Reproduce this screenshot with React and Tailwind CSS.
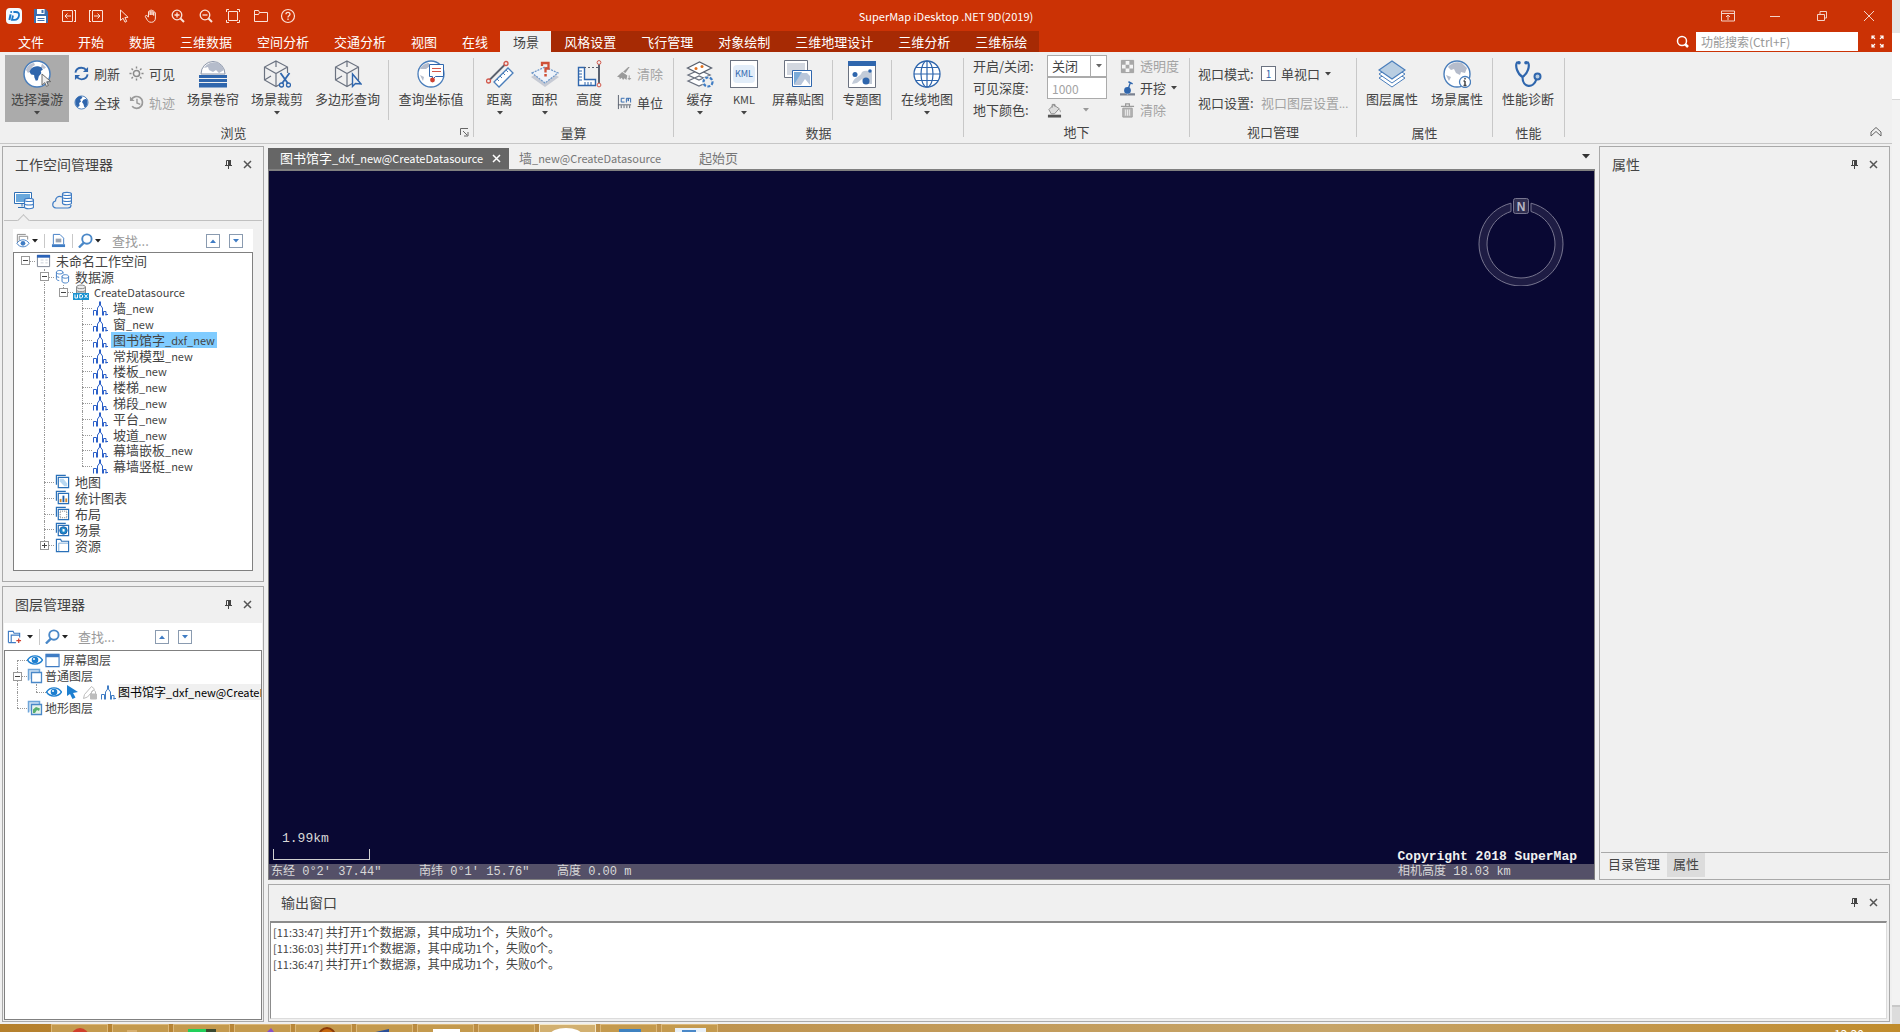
import React from "react";

/* ---------- small shared pieces ---------- */

const Svg = ({ s = 16, vb = 16, className = "", children }) => (
  <svg
    width={s}
    height={s}
    viewBox={`0 0 ${vb} ${vb}`}
    fill="none"
    stroke="currentColor"
    strokeWidth="1"
    aria-hidden="true"
    className={`shrink-0 ${className}`}
  >
    {children}
  </svg>
);

const Caret = ({ className = "text-[#444]" }) => (
  <svg width="6" height="4" viewBox="0 0 6 4" aria-hidden="true" className={`shrink-0 ${className}`}>
    <path d="M0 0h6L3 3.6z" fill="currentColor" />
  </svg>
);

/* Latin runs are set smaller than the Chinese characters around them */
const Mixed = ({ text }) =>
  text.split(/([\x20-\x7e]+)/).map((part, i) =>
    i % 2 ? (
      <span key={i} className="text-[11px]">{part}</span>
    ) : (
      part
    ),
  );

/* ---------- title bar icons ---------- */

const LogoIcon = () => (
  <Svg s={16}>
    <rect x="0" y="0" width="16" height="16" rx="4" fill="#f4faff" stroke="none" />
    <path d="M4.600 6.400 3.400 12" stroke="#1a78c8" strokeWidth="2" />
    <circle cx="5.200" cy="4" r="1" fill="#1a78c8" stroke="none" />
    <path d="M7.400 4h2.400c2.400 0 3.600 1.300 3.200 3.700-.5 2.700-2.100 4.200-4.600 4.200H6l1-4.400" stroke="#1a78c8" strokeWidth="1.800" />
  </Svg>
);
const SaveIcon = () => (
  <Svg s={16}>
    <path d="M1 1h11.500L15 3.500V15H1z" fill="#3b6fb0" stroke="none" />
    <rect x="4" y="1" width="7.500" height="5" fill="#fff" stroke="none" />
    <rect x="8.500" y="2" width="2" height="3" fill="#3b6fb0" stroke="none" />
    <rect x="3" y="8" width="10" height="7" fill="#fff" stroke="none" />
    <path d="M4.500 10.500h7M4.500 12.500h7" stroke="#3b6fb0" />
  </Svg>
);
const BoxLeftIcon = () => (
  <Svg s={16}>
    <path d="M1.500 2.500h10v11h-10zM14.500 2v12M13 2.500h1.500M13 13.500h1.500M4 8h6M6.500 5.500 4 8l2.500 2.500" />
  </Svg>
);
const BoxRightIcon = () => (
  <Svg s={16}>
    <path d="M4.500 2.500h10v11h-10zM1.500 2v12M3 2.500H1.500M3 13.500H1.500M6 8h6M9.500 5.500 12 8l-2.500 2.500" />
  </Svg>
);
const ArrowIcon = () => (
  <Svg s={16}>
    <path d="M4.500 2v10.500l2.600-2.300 1.900 4 1.700-.8-1.800-3.900 3.200-.2z" />
  </Svg>
);
const HandIcon = () => (
  <Svg s={16}>
    <path d="M5.500 9V3.800c0-1.200 1.700-1.200 1.700 0V7V2.800c0-1.200 1.800-1.200 1.800 0V7V3.400c0-1.200 1.700-1.200 1.700 0V7.500V5c0-1.200 1.700-1.200 1.700 0v5c0 2.500-1.400 4.300-4 4.300-2.700 0-3.600-1.300-4.700-3.200L2.400 8.700c-.5-1 .7-1.700 1.500-1z" />
  </Svg>
);
const ZoomInIcon = () => (
  <Svg s={16}>
    <circle cx="7" cy="7" r="4.800" strokeWidth="1.300" />
    <path d="M10.500 10.500 14 14" strokeWidth="2" />
    <path d="M4.500 7h5M7 4.500v5" strokeWidth="1.300" />
  </Svg>
);
const ZoomOutIcon = () => (
  <Svg s={16}>
    <circle cx="7" cy="7" r="4.800" strokeWidth="1.300" />
    <path d="M10.500 10.500 14 14" strokeWidth="2" />
    <path d="M4.500 7h5" strokeWidth="1.300" />
  </Svg>
);
const FitIcon = () => (
  <Svg s={16}>
    <path d="M3.500 3.500h9v9h-9z" />
    <path d="M1.500 4V1.500H4M12 1.500h2.500V4M14.500 12v2.500H12M4 14.500H1.500V12" />
  </Svg>
);
const FolderIcon = () => (
  <Svg s={16}>
    <path d="M1.500 13.500v-11h4l1 2h8v9zM1.500 6.500h4l1-2" />
  </Svg>
);
const HelpIcon = () => (
  <Svg s={16}>
    <circle cx="8" cy="8" r="6.500" strokeWidth="1.200" />
    <path d="M6 6.300c0-2.600 4-2.500 4 0 0 1.500-2 1.500-2 3.200M8 10.500v1.500" strokeWidth="1.300" />
  </Svg>
);

const quickTools = [
  ["SuperMap", LogoIcon],
  ["保存", SaveIcon],
  ["后退", BoxLeftIcon],
  ["前进", BoxRightIcon],
  ["选择", ArrowIcon],
  ["平移", HandIcon],
  ["放大", ZoomInIcon],
  ["缩小", ZoomOutIcon],
  ["全幅", FitIcon],
  ["打开", FolderIcon],
  ["帮助", HelpIcon],
];

const windowTools = [
  ["功能区", <Svg s={14} vb={14}><path d="M.5 2h13v10H.5zM.5 4.500h13M7 11V6M5 8l2-2 2 2" /></Svg>],
  ["最小化", <Svg s={12} vb={12}><path d="M1 6.500h10" /></Svg>],
  ["还原", <Svg s={12} vb={12}><path d="M1.500 4.500h7v6h-7zM4 4V1.500h6.500V8H9" /></Svg>],
  ["关闭", <Svg s={12} vb={12}><path d="m1 1 10 10M11 1 1 11" /></Svg>],
];

/* ---------- ribbon icons ---------- */

const CONTINENT = "M8 8c2-2.600 6-3.400 8-2.400l2.800.9 1 2.300-2 1.200.5 2.300-2.500 3-1 3.900-2 .6-1.400-3.400-.3-2.400-3-.6-1.700-2.600z";

const RoamIcon = () => (
  <Svg s={28} vb={28}>
    <circle cx="14" cy="14" r="13" fill="#fff" stroke="#4a7ebb" strokeWidth="1.500" />
    <path d="M3 10c1-4 5-7 8-7l1 2-3 2-1 4-3 2zM19 3.500l4 4-2 1.500-3-2z" fill="#b9c0d0" stroke="none" />
    <path d={CONTINENT} transform="translate(0 1)" fill="#2f66ad" stroke="none" />
    <path d="m19 14 0 11 2.800-2.400 1.600 3.800 2-.9-1.700-3.700 4.100-.2z" fill="#eee" stroke="#6a6a6a" />
  </Svg>
);
const CurtainIcon = () => (
  <Svg s={28} vb={28}>
    <path d="M2 14a12 12.500 0 0 1 24 0z" fill="#fff" stroke="#8a94a8" />
    <path d="M5 8c3-5 9-7 14-5 3 1.500 5 4 6 7l-5 3-3-3-3 2-4-2-1-3z" fill="#b5bccb" stroke="none" />
    <path d="M0 15h28v3H0zM0 19h28v3H0zM0 23h28v4.500H0z" fill="#2f66ad" stroke="none" />
  </Svg>
);
const CubePath = () => (
  <g stroke="#6b7280" strokeWidth="1.200">
    <path d="m13 1 11.500 6v13L13 26.500 1.500 20V7zM1.500 7 13 13.500 24.500 7M13 13.500v13M13 1v6M1.500 20 8 16" />
  </g>
);
const CubeCutIcon = () => (
  <Svg s={28} vb={28}>
    <CubePath />
    <path d="M16 13h12v15H16z" fill="#efefef" stroke="none" />
    <path d="m17.500 13 7.500 10.500M26.500 13 19 23.500" stroke="#2f66ad" strokeWidth="1.800" />
    <circle cx="18.500" cy="25" r="2" stroke="#2f66ad" strokeWidth="1.300" />
    <circle cx="25.500" cy="25" r="2" stroke="#2f66ad" strokeWidth="1.300" />
  </Svg>
);
const CubePickIcon = () => (
  <Svg s={28} vb={28}>
    <CubePath />
    <path d="M18.500 14v12.500l3-3 5.500.5z" fill="#efefef" stroke="#2f66ad" strokeWidth="1.400" />
  </Svg>
);
const CoordIcon = () => (
  <Svg s={28} vb={28}>
    <circle cx="14" cy="14" r="13" fill="#fff" stroke="#4a7ebb" strokeWidth="1.300" />
    <path d="M3 9c2-4 6-6 9-6l1 3-4 3zM3 15l4 2-1 4z" fill="#b5bccb" stroke="none" />
    <path d="M12.500 4.500h14v12h-8l-3 3v-3h-3z" fill="#fff" stroke="#2f66ad" />
    <path d="M15 8.500h9M15 11.500h9" stroke="#d2574a" strokeWidth="1.200" />
    <circle cx="15.500" cy="20" r="2.400" fill="#cf4030" stroke="none" />
  </Svg>
);
const RefreshIcon = () => (
  <Svg s={15} className="text-[#2f66ad]">
    <path d="M1.500 7C2 3.800 4.700 1.800 8 1.800c2.200 0 4 1 5.200 2.700M14.500 9c-.5 3.200-3.200 5.200-6.500 5.200-2.200 0-4-1-5.200-2.700" strokeWidth="2" />
    <path d="M15 1v5.500H9.500zM1 15V9.500h5.500z" fill="currentColor" stroke="none" />
  </Svg>
);
const GlobeSmallIcon = () => (
  <Svg s={15}>
    <circle cx="8" cy="8" r="7" fill="#fff" stroke="#4a7ebb" />
    <path d="M1.500 6C3 2 6 1 8 1.200L9 3 6.500 5l1 2-2 1.500.5 3L4 13C2 11.500 1 9 1.500 6zM10 5l3-1c2 2 2 6 0 8.500l-2 .5-1-3.500-1.500-2z" fill="#2f66ad" stroke="none" />
  </Svg>
);
const SunIcon = () => (
  <Svg s={15} className="text-[#8a8a8a]">
    <circle cx="8" cy="8" r="3.300" strokeWidth="1.600" />
    <path d="M8 .5v2.200M8 13.300v2.200M.5 8h2.200M13.300 8h2.200M2.700 2.700l1.500 1.500M11.800 11.800l1.500 1.500M13.300 2.700l-1.500 1.500M4.200 11.800l-1.500 1.500" strokeWidth="1.500" />
  </Svg>
);
const HistoryIcon = () => (
  <Svg s={15} className="text-[#9a9a9a]">
    <path d="M2.500 5a6.300 6.300 0 1 1 .8 7" strokeWidth="1.800" />
    <path d="M1 1.500v5h5z" fill="currentColor" stroke="none" />
    <path d="M8.500 4v4.500L12 10" strokeWidth="1.500" />
  </Svg>
);
const DistanceIcon = () => (
  <Svg s={28} vb={28}>
    <path d="m3 20.500 16-16" stroke="#59606e" strokeWidth="1.800" />
    <circle cx="2.500" cy="21" r="2" stroke="#d2574a" strokeWidth="1.300" fill="#efefef" />
    <circle cx="20" cy="3.500" r="2" stroke="#d2574a" strokeWidth="1.300" fill="#efefef" />
    <path d="M8 22 22 8l5 5-14 14z" fill="#fff" stroke="#4a7ebb" strokeWidth="1.300" />
    <path d="m11 19 2 2M14 16l2 2M17 13l2 2M20 10l2 2" stroke="#4a7ebb" />
  </Svg>
);
const AreaIcon = () => (
  <Svg s={28} vb={28}>
    <path d="m0 17 14 10 14-10-14-8z" fill="#c6cad4" stroke="none" />
    <path d="m1 13 13-6 13 6-13 10z" fill="#eef3fa" stroke="#6d97c9" strokeWidth="1.200" strokeDasharray="2 1" />
    <path d="M11 6V3h6.500v5.500h-3v4" stroke="#cf5038" strokeWidth="2.300" />
    <path d="M13.300 14h2.500v2.500h-2.500z" fill="#cf5038" stroke="none" />
  </Svg>
);
const HeightIcon = () => (
  <Svg s={28} vb={28}>
    <path d="M3.500 7.500h6v12h11v6h-17z" fill="#fff" stroke="#2f66ad" strokeWidth="1.400" />
    <path d="M4 11h3M4 14h3M4 17h3M4 20h3M10 25v-3M13 25v-3M16 25v-3" stroke="#2f66ad" />
    <path d="M9 7.500h14" stroke="#59606e" strokeDasharray="2 2" />
    <path d="M24 4v19" stroke="#59606e" strokeWidth="2" />
    <circle cx="24" cy="2.500" r="1.900" stroke="#d2574a" fill="#efefef" />
    <circle cx="24" cy="25" r="1.900" stroke="#d2574a" fill="#efefef" />
  </Svg>
);
const BrushIcon = () => (
  <Svg s={15} className="text-[#9a9a9a]">
    <path d="M13.500 1 9 7.500 6.500 6 12 1z" fill="currentColor" stroke="none" />
    <path d="M5.500 6.500 11 10l-1 5-2-2-1.500 2L5 12.500 3 14l-.5-2L0 11.500z" fill="currentColor" stroke="none" />
    <path d="M13 10v5M11.500 13.500h3.500" />
  </Svg>
);
const UnitIcon = () => (
  <Svg s={15}>
    <path d="M1.500 0v15M1 10.500h14M4.500 11v3M7.500 11v3M10.500 11v3M13.500 11v3" stroke="#59606e" />
    <path d="M8 3.500H4.500v4H8M10 8V3.500h2v3v-3h2.500V8" stroke="#2f66ad" />
  </Svg>
);
const CacheIcon = () => (
  <Svg s={28} vb={28}>
    <path d="m2 21 11-5 11 5-11 5zM2 15l11-5 11 5-11 5z" fill="#fff" stroke="#6b7280" strokeWidth="1.300" />
    <path d="m1.500 8 12-6 12 6-12 6z" fill="#fff" stroke="#59606e" strokeWidth="1.300" />
    <circle cx="10" cy="8.500" r="1.500" fill="#e07020" stroke="none" />
    <circle cx="16" cy="6.500" r="1.500" fill="#e07020" stroke="none" />
    <circle cx="22" cy="22" r="6" fill="#efefef" stroke="none" />
    <circle cx="22" cy="22" r="4.500" stroke="#3f7cc4" strokeWidth="2.200" strokeDasharray="3 1.500" />
  </Svg>
);
const KmlIcon = () => (
  <span className="grid h-[28px] w-[28px] place-items-center border border-[#6b7280] bg-white">
    <span className="rounded-sm bg-[#e2edf9] px-0.5 text-[9px] leading-[18px] text-[#2f66ad]">KML</span>
  </span>
);
const OverlayIcon = () => (
  <Svg s={28} vb={28}>
    <path d="M.5 .5h23v17H.5z" fill="#fff" stroke="#6b7280" />
    <path d="M3 3h18v12H3z" fill="#d3d8e0" stroke="none" />
    <path d="M8.500 10.500h19v16h-19z" fill="#fff" stroke="#2f66ad" />
    <path d="m10 25 7-12h6l3 3v9z" fill="#b9c6da" stroke="none" />
    <path d="M10 25V12h8z" fill="#7aaad8" stroke="none" />
    <path d="m17 25 4-6 5 6z" fill="#fff" stroke="none" />
  </Svg>
);
const ThemeIcon = () => (
  <Svg s={28} vb={28}>
    <path d="M.5 1.500h27v26H.5z" fill="#fff" stroke="#6b7280" />
    <path d="M0 1h28v5H0z" fill="#2f66ad" stroke="none" />
    <path d="M4 24c2-8 8-6 10-12 3-2 6-1 10 0v12h-7l-3-5-5 4z" fill="#c2cbd8" stroke="none" />
    <circle cx="7" cy="14.500" r="2.500" fill="#2f66ad" stroke="none" />
    <circle cx="18" cy="21" r="3.500" fill="#2f66ad" stroke="none" />
    <circle cx="22" cy="11" r="1.800" fill="#2f66ad" stroke="none" />
  </Svg>
);
const OnlineIcon = () => (
  <Svg s={28} vb={28} className="text-[#2f66ad]">
    <circle cx="14" cy="14" r="13" strokeWidth="1.300" fill="#fff" />
    <ellipse cx="14" cy="14" rx="6" ry="13" strokeWidth="1.200" />
    <path d="M14 1v26M1 14h26M3 7.500h22M3 20.500h22" strokeWidth="1.200" />
  </Svg>
);
const CheckerIcon = () => (
  <Svg s={15}>
    <path d="M1.500 1.500h13v13h-13z" fill="#f4f4f4" stroke="#9a9a9a" />
    <path d="M2 2h4v4H2zM10 2h4v4h-4zM6 6h4v4H6zM2 10h4v4H2zM10 10h4v4h-4z" fill="#a8a8a8" stroke="none" />
  </Svg>
);
const DigIcon = () => (
  <Svg s={15}>
    <path d="M0 15.500V13h5l3 1.500 3-1.500h5v2.500z" fill="#7a8190" stroke="none" />
    <circle cx="8" cy="10" r="3.600" fill="#2f66ad" stroke="none" />
    <path d="m8.500 9 2.500-7M9 .8 13.500 3" stroke="#2f66ad" strokeWidth="1.500" />
  </Svg>
);
const TrashIcon = () => (
  <Svg s={15} className="text-[#9a9a9a]">
    <path d="M1 3.500h14M6 3V1h4v2" strokeWidth="1.300" />
    <path d="M3 5.500h10v9.500H3z" fill="#b9b9b9" />
    <path d="M6 7v6.500M8 7v6.500M10 7v6.500" stroke="#eee" />
  </Svg>
);
const BucketIcon = () => (
  <Svg s={15}>
    <path d="m2 7 5-5 6 4-5 5.500H4.500z" fill="#ddd" stroke="#8a8a8a" />
    <path d="M5.500 5V1.500h3V4" stroke="#8a8a8a" />
    <path d="M13 6c2 2 2 3 1 4z" fill="#8a8a8a" stroke="none" />
    <path d="M1 12.500h14v3H1z" fill="#555" stroke="none" />
  </Svg>
);
const LayersIcon = () => (
  <Svg s={28} vb={28} className="text-[#4a7ebb]">
    <path d="m1 18 13-8 13 8-13 9z" fill="#fff" />
    <path d="m1 14 13-8 13 8-13 9z" fill="#fff" />
    <path d="m1 10 13-9 13 9-13 9z" fill="#b9cee2" stroke="#4a7ebb" strokeWidth="1.200" />
  </Svg>
);
const SceneInfoIcon = () => (
  <Svg s={28} vb={28}>
    <circle cx="14" cy="14" r="13" fill="#fff" stroke="#4a7ebb" strokeWidth="1.400" />
    <path d="M5 7c3-4 9-6 14-4l5 5-2 5-4-1-1 3-4-2-2-4-3 1zM3 15l5 2-2 4z" fill="#b5bccb" stroke="none" />
    <circle cx="22" cy="22" r="5.500" fill="#fff" stroke="#4a7ebb" strokeWidth="1.300" />
    <path d="M22 21v4.500M22 18v1.600M20.500 21H22M20.500 25.500h3" stroke="#444" strokeWidth="1.500" />
  </Svg>
);
const StethoscopeIcon = () => (
  <Svg s={28} vb={28} className="text-[#2f66ad]">
    <path d="M5 2.500H3c-2 3 0 11 5.500 14.500C14 13.500 16 5.500 14 2.500h-2M8.500 17c0 11 11 12 14 2" strokeWidth="2.200" />
    <circle cx="5" cy="2.800" r="1.800" fill="currentColor" stroke="none" />
    <circle cx="12" cy="2.800" r="1.800" fill="currentColor" stroke="none" />
    <circle cx="23.500" cy="16.500" r="3" strokeWidth="2" fill="#b9cee2" />
  </Svg>
);

/* ---------- tree icons ---------- */

const LineSetIcon = ({ color = "text-[#2a5fc8]" }) => (
  <Svg s={16} className={color}>
    <path d="M1.500 15.500v-5h3v5M5.500 15.500V8L8 4.500 10.500 8v7.500M11.500 15.500v-4H14v4M4 14.500h2M10 14.500h2M13.500 14.500H16" />
    <path d="M7 1.500h2V5H7z" fill="currentColor" stroke="none" />
  </Svg>
);
const WorkspaceIcon = () => (
  <Svg s={15}>
    <path d="M1.500 2.500h13v12h-13z" fill="#fff" stroke="#7a8190" />
    <path d="M1 2h14v3H1z" fill="#2a62b8" stroke="none" />
    <path d="M5 7.500h3M5 10.500h3M10 7.500h2.500M10 10.500h2.500" stroke="#c9ced8" />
  </Svg>
);
const SourcesIcon = () => (
  <Svg s={15} className="text-[#3f7cc4]">
    <path d="M8.500 3.500c0-2.600-7-2.600-7 0v7c0 1 1.500 1.700 3 1.900M1.500 7c0 1 1 1.600 3 1.900M1.500 3.500c0 2.400 7 2.400 7 0V5" />
    <path d="M7.500 8v5c0 2.600 7 2.600 7 0V8c0-2.600-7-2.600-7 0 0 2.400 7 2.400 7 0" fill="#fff" />
  </Svg>
);
const UdbIcon = () => (
  <Svg s={16}>
    <path d="M3.500 3v6h9V3c0-2.600-9-2.600-9 0 0 2.200 9 2.200 9 0M3.500 6c0 2.200 9 2.200 9 0" fill="#ececec" stroke="#8a8a8a" />
    <path d="M0 9h16v7H0z" fill="#1b93d1" stroke="none" />
    <path d="M2 10.500v3.500h2.500v-3.500M6.800 10.500h1.700l1 1v1.500l-1 1H6.800zM11.500 10.500l3 3.500M14.500 10.500l-3 3.500" stroke="#fff" />
  </Svg>
);
const Stack = ({ children }) => (
  <Svg s={15}>
    <path d="M1.500 11.500v-10h10" stroke="#2a70b8" strokeWidth="1.300" />
    <path d="M3.500 3.500h11v11h-11z" fill="#fff" stroke="#2a70b8" strokeWidth="1.300" />
    {children}
  </Svg>
);
const MapIcon = () => (
  <Stack>
    <path d="M5 5h4l4 5v3h-3L5 8z" fill="#b8d8f2" stroke="none" />
  </Stack>
);
const ChartIcon = () => (
  <Stack>
    <path d="M5 13V9.500h2V13z" fill="#d08a30" stroke="none" />
    <path d="M8 13V6h2v7z" fill="#1f5fa8" stroke="none" />
    <path d="M11 13V9h2v4z" fill="#d08a30" stroke="none" />
  </Stack>
);
const LayoutIcon = () => (
  <Stack>
    <path d="M5.500 5.500h7v7h-7z" stroke="#777" strokeDasharray="1 1" />
  </Stack>
);
const SceneIcon = () => (
  <Stack>
    <circle cx="9" cy="9" r="4" fill="#1d86c8" stroke="#1f5fa8" />
    <path d="m8 7 2.500 1-.5 2.500L8 10z" fill="#fff" stroke="none" />
  </Stack>
);
const ResourceIcon = () => (
  <Svg s={15}>
    <path d="M1.500 13.500v-12H6l1 2h7.500v11h-13z" fill="#fff" stroke="#2a70b8" strokeWidth="1.200" />
    <path d="M4 14V5.500h10" stroke="#7aaad8" />
  </Svg>
);
const EyeIcon = ({ s = 16 }) => (
  <Svg s={s}>
    <path d="M.5 8C4 2.500 12 2.500 15.500 8 12 13.500 4 13.500.5 8z" fill="#fff" stroke="#1d7fd0" strokeWidth="1.400" />
    <circle cx="8" cy="8" r="3.300" fill="#1d7fd0" stroke="none" />
    <circle cx="7" cy="7" r="1" fill="#fff" stroke="none" />
  </Svg>
);
const ScreenLayerIcon = () => (
  <Svg s={15}>
    <path d="M1 1.500h14v13H1z" fill="#fff" stroke="#3f7cc4" strokeWidth="1.200" />
    <path d="M1 1h14v3.500H1z" fill="#3f7cc4" stroke="none" />
  </Svg>
);
const NormalLayerIcon = () => (
  <Svg s={16}>
    <path d="M1.500 12.500v-11h11v3" stroke="#6fa6da" strokeWidth="1.500" fill="#cfe2f4" />
    <path d="M4.500 4.500h10v10h-10z" fill="#fff" stroke="#4a88c8" strokeWidth="1.300" />
  </Svg>
);
const TerrainLayerIcon = () => (
  <Svg s={16}>
    <path d="M1.500 12.500v-11h11v3" stroke="#6fa6da" strokeWidth="1.500" fill="#cfe2f4" />
    <path d="M4.500 4.500h10v10h-10z" fill="#e8f3ea" stroke="#4a88c8" strokeWidth="1.300" />
    <path d="M6 13V9.500L9 7l4 1.500-1 2.500-2-1-2 3z" fill="#58b070" stroke="none" />
  </Svg>
);
const PointerIcon = () => (
  <Svg s={16}>
    <path d="M3 1v11l3-2 2.500 5 3-1.500L9 9l5-1z" fill="#1d7fd0" stroke="none" />
  </Svg>
);
const EditLockIcon = () => (
  <Svg s={16} className="text-[#bdbdbd]">
    <path d="m1.500 14.500 1-4 7-8 3 2.500-7 8z" />
    <path d="M8.500 10h6v5h-6z" fill="#bdbdbd" />
    <path d="M9.500 10V8c0-2 4-2 4 0v2" />
  </Svg>
);
const SearchBlueIcon = () => (
  <Svg s={15} className="text-[#4a88c8]">
    <circle cx="9.500" cy="6.500" r="5" strokeWidth="2" />
    <path d="m6 10.500-5 5" strokeWidth="2.500" />
  </Svg>
);

/* ---------- ribbon building blocks ---------- */

function BigButton({ icon: Icon, label, caret, active, width = "w-[64px]" }) {
  return (
    <button
      type="button"
      className={`flex h-[67px] shrink-0 flex-col items-center pt-[5px] ${width} ${active ? "bg-[#ababab]" : ""}`}
    >
      <Icon />
      <span className="mt-[3px] leading-4 whitespace-nowrap"><Mixed text={label} /></span>
      {caret && <Caret className="mt-1 text-[#444]" />}
    </button>
  );
}

function SmallButton({ icon: Icon, label, disabled, height = "h-[29px]", caret }) {
  return (
    <button
      type="button"
      disabled={disabled}
      className={`flex items-center gap-[5px] whitespace-nowrap ${height} ${disabled ? "text-[#a3a3a3]" : ""}`}
    >
      <Icon />
      <span>{label}</span>
      {caret && <Caret />}
    </button>
  );
}

const Divider = () => <span className="mx-[2px] mt-[5px] h-[60px] w-px shrink-0 bg-[#c8c8c8]" />;

function Group({ title, width, children, launcher, pad = "pl-[2px]" }) {
  return (
    <section className={`flex shrink-0 ${width}`}>
      <div className="flex min-w-0 flex-1 flex-col pt-[3px]">
        <div className={`flex h-[67px] ${pad}`}>{children}</div>
        <div className="flex h-[22px] items-center justify-center">
          <h2 className={launcher ? "flex-1 pl-[4px] text-center" : ""}>{title}</h2>
          {launcher && (
            <button type="button" aria-label="更多" className="mr-[4px]">
              <Svg s={9} vb={9} className="text-[#666]">
                <path d="M.5 7V.5H8M3 3l4 4M8 4v4H4" />
              </Svg>
            </button>
          )}
        </div>
      </div>
      <span className="mt-[6px] h-[79px] w-px bg-[#c8c8c8]" />
    </section>
  );
}

function Ribbon() {
  return (
    <div className="flex h-[92px] shrink-0 border-b border-[#c6c6c6] bg-[#f0f0f0]">
      <Group title="浏览" width="w-[474px] pl-[3px]" launcher>
        <BigButton icon={RoamIcon} label="选择漫游" caret active />
        <div className="mt-[4px] ml-[5px] w-[55px]">
          <SmallButton icon={RefreshIcon} label="刷新" />
          <SmallButton icon={GlobeSmallIcon} label="全球" />
        </div>
        <div className="mt-[4px] w-[52px]">
          <SmallButton icon={SunIcon} label="可见" />
          <SmallButton icon={HistoryIcon} label="轨迹" disabled />
        </div>
        <BigButton icon={CurtainIcon} label="场景卷帘" />
        <BigButton icon={CubeCutIcon} label="场景裁剪" caret />
        <BigButton icon={CubePickIcon} label="多边形查询" width="w-[77px]" />
        <Divider />
        <BigButton icon={CoordIcon} label="查询坐标值" width="w-[80px]" />
      </Group>
      <Group title="量算" width="w-[200px]" pad="pl-[3px]">
        <BigButton icon={DistanceIcon} label="距离" caret width="w-[45px]" />
        <BigButton icon={AreaIcon} label="面积" caret width="w-[45px]" />
        <BigButton icon={HeightIcon} label="高度" width="w-[44px]" />
        <div className="mt-[4px] ml-[6px]">
          <SmallButton icon={BrushIcon} label="清除" disabled />
          <SmallButton icon={UnitIcon} label="单位" />
        </div>
      </Group>
      <Group title="数据" width="w-[290px]" pad="pl-[3px]">
        <BigButton icon={CacheIcon} label="缓存" caret width="w-[45px]" />
        <BigButton icon={KmlIcon} label="KML" caret width="w-[44px]" />
        <BigButton icon={OverlayIcon} label="屏幕贴图" />
        <Divider />
        <BigButton icon={ThemeIcon} label="专题图" width="w-[54px]" />
        <Divider />
        <BigButton icon={OnlineIcon} label="在线地图" caret width="w-[66px]" />
      </Group>
      <Group title="地下" width="w-[226px]">
        <div className="ml-[7px] grid grid-cols-[74px_60px_auto] auto-rows-[22px] items-center">
          <label htmlFor="under-switch">开启/关闭:</label>
          <span className="relative">
            <select
              id="under-switch"
              defaultValue="关闭"
              className="h-[22px] w-full appearance-none border border-[#ababab] bg-white pl-[4px] leading-4"
            >
              <option>关闭</option>
              <option>开启</option>
            </select>
            <span className="pointer-events-none absolute inset-y-0 right-0 grid w-[17px] place-items-center border border-[#ababab]">
              <Caret className="text-[#666]" />
            </span>
          </span>
          <span className="ml-[13px]">
            <SmallButton icon={CheckerIcon} label="透明度" disabled height="h-[22px]" />
          </span>
          <label htmlFor="under-depth">可见深度:</label>
          <input
            id="under-depth"
            defaultValue="1000"
            disabled
            className="h-[22px] w-full border border-[#ababab] bg-white pl-[4px] text-xs text-[#a3a3a3]"
          />
          <span className="ml-[13px]">
            <SmallButton icon={DigIcon} label="开挖" caret height="h-[22px]" />
          </span>
          <span>地下颜色:</span>
          <button type="button" aria-label="地下颜色" className="flex h-[22px] items-center gap-[21px]">
            <BucketIcon />
            <Caret className="text-[#999]" />
          </button>
          <span className="ml-[13px]">
            <SmallButton icon={TrashIcon} label="清除" disabled height="h-[22px]" />
          </span>
        </div>
      </Group>
      <Group title="视口管理" width="w-[167px]">
        <div className="mt-[4px] ml-[6px] grid grid-cols-[63px_auto] auto-rows-[29px] items-center whitespace-nowrap">
          <span>视口模式:</span>
          <button type="button" className="flex items-center gap-[5px]">
            <span className="grid h-[15px] w-[15px] place-items-center border border-[#6b7280] bg-white text-[10px] leading-none text-[#2f66ad]">
              1
            </span>
            单视口
            <Caret />
          </button>
          <span>视口设置:</span>
          <button type="button" disabled className="text-left text-[#a3a3a3]">
            <Mixed text="视口图层设置..." />
          </button>
        </div>
      </Group>
      <Group title="属性" width="w-[136px]">
        <BigButton icon={LayersIcon} label="图层属性" width="w-[66px]" />
        <BigButton icon={SceneInfoIcon} label="场景属性" />
      </Group>
      <Group title="性能" width="w-[72px]">
        <BigButton icon={StethoscopeIcon} label="性能诊断" width="w-[66px]" />
      </Group>
      <div className="flex flex-1 items-end justify-end pr-[10px] pb-[5px]">
        <button type="button" aria-label="折叠功能区">
          <Svg s={12} vb={12} className="text-[#666]">
            <path d="m1 6 5-4.500L11 6M1 10l5-4.500L11 10M1 6v4M11 6v4" />
          </Svg>
        </button>
      </div>
    </div>
  );
}

/* ---------- header ---------- */

const plainTabs = ["开始", "数据", "三维数据", "空间分析", "交通分析", "视图", "在线"];
const sceneTabs = ["风格设置", "飞行管理", "对象绘制", "三维地理设计", "三维分析", "三维标绘"];

function Header() {
  return (
    <header className="shrink-0 bg-[#cb3205] text-white">
      <div className="flex h-[31px] items-center">
        <div className="flex flex-1 basis-0">
          <div className="flex w-[298px] justify-between pl-1 text-[#fbe3da]">
            {quickTools.map(([name, Icon]) => (
              <button key={name} type="button" aria-label={name} className="grid w-5 place-items-center">
                <Icon />
              </button>
            ))}
          </div>
        </div>
        <h1 className="text-[11px]">SuperMap iDesktop .NET 9D(2019)</h1>
        <div className="flex flex-1 basis-0 justify-end text-[#f4d3c8]">
          {windowTools.map(([name, icon]) => (
            <button key={name} type="button" aria-label={name} className="grid w-[47px] place-items-center">
              {icon}
            </button>
          ))}
        </div>
      </div>
      <div className="flex h-[21px]">
        <nav className="flex leading-[21px]">
          <button type="button" className="w-[65px] pl-[18px] text-left">文件</button>
          {plainTabs.map((t) => (
            <button key={t} type="button" className="pr-[12px] pl-[13px]">{t}</button>
          ))}
          <button type="button" className="bg-[#f0f0f0] pr-[12px] pl-[13px] text-[#444]">场景</button>
          <div className="flex bg-[#a62a04]">
            {sceneTabs.map((t) => (
              <button key={t} type="button" className="pr-[12px] pl-[13px]">{t}</button>
            ))}
          </div>
        </nav>
        <div className="flex flex-1 items-center justify-end pr-[8px]">
          <Svg s={14} vb={14} className="mr-[6px]">
            <circle cx="6" cy="6" r="4.500" strokeWidth="1.500" />
            <path d="m9 9 3 3" strokeWidth="2.500" />
          </Svg>
          <input
            aria-label="功能搜索"
            placeholder="功能搜索(Ctrl+F)"
            className="h-[19px] w-[162px] bg-white pl-[5px] text-[12px] leading-4 text-[#444] outline-none placeholder:text-[#999]"
          />
          <button type="button" aria-label="全屏" className="ml-[13px]">
            <Svg s={13} vb={13}>
              <path d="M1 4V1h3M9 1h3v3M12 9v3H9M4 12H1V9M1 1l3 3M12 1 9 4M12 12 9 9M1 12l3-3" strokeWidth="1.200" />
            </Svg>
          </button>
        </div>
      </div>
    </header>
  );
}

/* ---------- panels ---------- */

function PanelHeader({ title }) {
  return (
    <div className="mb-[2px] flex h-[34px] shrink-0 items-center pl-[12px]">
      <h2 className="flex-1 text-[14px]">{title}</h2>
      <button type="button" aria-label="固定" className="mr-[10px]">
        <Svg s={9} vb={9} className="text-[#444]">
          <path d="M2.500 .5h4v5h-4zM1 5.500h7M4.500 5.500V9" />
          <path d="M4 0h3v6H4z" fill="currentColor" stroke="none" />
        </Svg>
      </button>
      <button type="button" aria-label="关闭" className="mr-[11px]">
        <Svg s={9} vb={9} className="text-[#555]">
          <path d="m1 1 7 7M8 1 1 8" strokeWidth="1.500" />
        </Svg>
      </button>
    </div>
  );
}

const StepButtons = () => (
  <>
    <button type="button" aria-label="上一个" className="grid h-[14px] w-[14px] place-items-center border border-[#8a9bb0] text-[#3f7cc4]">
      <Caret className="rotate-180" />
    </button>
    <button type="button" aria-label="下一个" className="ml-[9px] grid h-[14px] w-[14px] place-items-center border border-[#8a9bb0] text-[#3f7cc4]">
      <Caret className="" />
    </button>
  </>
);

/* One connector column of a tree row: up/down = vertical halves, right = branch, box = expander */
function Cell({ up, down, right, box }) {
  return (
    <span className="relative w-[19px] shrink-0 self-stretch">
      {up && <i className="absolute top-0 bottom-1/2 left-[9px] border-l border-dotted border-[#999]" />}
      {down && <i className="absolute top-1/2 bottom-0 left-[9px] border-l border-dotted border-[#999]" />}
      {right && <i className="absolute top-1/2 right-0 left-[9px] border-t border-dotted border-[#999]" />}
      {box && (
        <button
          type="button"
          aria-label={box === "+" ? "展开" : "折叠"}
          className="absolute inset-0 m-auto grid h-[9px] w-[9px] place-items-center border border-[#999] bg-white"
        >
          <svg width="5" height="5" viewBox="0 0 5 5" stroke="#444" aria-hidden="true">
            <path d={box === "+" ? "M0 2.500h5M2.500 0v5" : "M0 2.500h5"} />
          </svg>
        </button>
      )}
    </span>
  );
}

const V = { up: true, down: true };
const T = { up: true, down: true, right: true };
const L = { up: true, right: true };
const sets = ["墙", "窗", "图书馆字_dxf", "常规模型", "楼板", "楼梯", "梯段", "平台", "坡道", "幕墙嵌板", "幕墙竖梃"];

const workspaceRows = [
  { label: "未命名工作空间", icon: WorkspaceIcon, cells: [{ right: true, box: "-" }] },
  { label: "数据源", icon: SourcesIcon, cells: [{}, { ...T, box: "-" }] },
  { label: "CreateDatasource", icon: UdbIcon, cells: [{}, V, { up: true, right: true, box: "-" }] },
  ...sets.map((s, i) => ({
    label: `${s}_new`,
    icon: LineSetIcon,
    selected: i === 2,
    cells: [{}, V, {}, i === sets.length - 1 ? L : T],
  })),
  { label: "地图", icon: MapIcon, cells: [{}, T] },
  { label: "统计图表", icon: ChartIcon, cells: [{}, T] },
  { label: "布局", icon: LayoutIcon, cells: [{}, T] },
  { label: "场景", icon: SceneIcon, cells: [{}, T] },
  { label: "资源", icon: ResourceIcon, cells: [{}, { ...L, box: "+" }] },
];

function WorkspacePanel() {
  return (
    <section className="flex min-h-0 flex-1 basis-0 flex-col border border-[#a9a9a9] bg-[#f0f0f0]">
      <PanelHeader title="工作空间管理器" />
      <div className="flex h-[37px] shrink-0 pl-[2px]">
        <button type="button" aria-label="本地" className="flex w-[38px] flex-col items-center pt-[8px]">
          <Svg s={20} vb={20}>
            <path d="M.5 1.500h17v11H.5z" fill="#fff" stroke="#2f6fb5" />
            <path d="M2 3h14v8H2z" fill="#6aa8dc" stroke="none" />
            <path d="M8 12.500v3M4 16.500h7" stroke="#2f6fb5" />
            <path d="M10.500 9v7c0 2.300 9 2.300 9 0V9c0-2.300-9-2.300-9 0 0 2 9 2 9 0M10.500 12.500c0 2 9 2 9 0" fill="#fff" stroke="#3f7cc4" strokeWidth="1.200" />
          </Svg>
        </button>
        <button type="button" aria-label="云端" className="flex w-[38px] flex-col items-center pt-[8px]">
          <Svg s={20} vb={20} className="text-[#3f7cc4]">
            <path d="M10 6c-4-2-6.500 1-6.500 4C0 10.500-.5 16.500 4 17h12c2 0 3-1 3-3" strokeWidth="1.200" />
            <path d="M10.500 3v9c0 2.300 9 2.300 9 0V3c0-2.300-9-2.300-9 0 0 2 9 2 9 0M10.500 6c0 2 9 2 9 0M10.500 9c0 2 9 2 9 0" fill="#fff" strokeWidth="1.200" />
          </Svg>
        </button>
      </div>
      <div className="relative mx-px h-[9px] shrink-0 border-t border-[#c0c0c0]">
        <i className="absolute -top-[5px] left-[15px] h-[9px] w-[9px] rotate-45 border-t border-l border-[#c0c0c0] bg-[#f0f0f0]" />
        <i className="absolute top-0 left-[10px] h-[6px] w-[20px] bg-[#f0f0f0]" />
      </div>
      <div className="mx-[10px] flex h-[23px] shrink-0 items-center bg-white pr-[10px] pl-[2px]">
        <button type="button" aria-label="显示" className="flex items-center gap-[2px] text-black">
          <Svg s={15}>
            <path d="M2.500 10V1.500h9M4.500 8V3.500h9V7" stroke="#8a8a8a" />
            <path d="M2 11c3-5 10-5 13 0-3 5-10 5-13 0z" fill="#fff" stroke="#3f7cc4" />
            <circle cx="8.500" cy="11" r="2.500" fill="#3f7cc4" stroke="none" />
          </Svg>
          <Caret className="text-[#222]" />
        </button>
        <span className="mx-[6px] h-[14px] w-px bg-[#c8c8c8]" />
        <button type="button" aria-label="定位">
          <Svg s={15}>
            <path d="M2.500 12V1.500h7l4 4V12" fill="#fff" stroke="#3f7cc4" />
            <path d="M5 6h6v4H5z" fill="#9aa3b0" stroke="none" />
            <path d="M1 12h14v3H1z" fill="#3f7cc4" stroke="none" />
          </Svg>
        </button>
        <span className="mr-[5px] ml-[6px] h-[14px] w-px bg-[#c8c8c8]" />
        <button type="button" aria-label="查找" className="flex items-center gap-[2px]">
          <SearchBlueIcon />
          <Caret className="text-[#222]" />
        </button>
        <input aria-label="查找" placeholder="查找..." className="ml-[11px] w-0 flex-1 outline-none placeholder:text-[#999]" />
        <StepButtons />
      </div>
      <div className="mx-[10px] mb-[10px] min-h-0 flex-1 overflow-hidden border border-[#808080] bg-white">
        <ul className="grid h-[300px] auto-rows-fr pl-[2px]">
          {workspaceRows.map(({ label, icon: Icon, cells, selected }) => (
            <li key={label} className="flex min-h-0 items-center">
              {cells.map((c, i) => (
                <Cell key={i} {...c} />
              ))}
              <span className="grid w-[16px] shrink-0 place-items-center"><Icon /></span>
              <span
                className={`ml-[3px] px-[2px] leading-[15px] whitespace-nowrap ${selected ? "bg-[#80ccff]" : ""}`}
              >
                <Mixed text={label} />
              </span>
            </li>
          ))}
        </ul>
      </div>
    </section>
  );
}

function LayerPanel() {
  return (
    <section className="flex min-h-0 flex-1 basis-0 flex-col border border-[#a9a9a9] bg-[#f0f0f0]">
      <PanelHeader title="图层管理器" />
      <div className="mx-px flex h-[27px] shrink-0 items-center bg-white pl-[3px]">
        <button type="button" aria-label="添加图层" className="flex items-center gap-[5px]">
          <Svg s={15}>
            <path d="M1.500 14.500v-12h5l1 2h6V9M4.500 14.500v-8h9M1.500 14.500h8" stroke="#3f7cc4" strokeWidth="1.200" />
            <path d="M12.500 10v5M10 12.500h5" stroke="#cf4030" strokeWidth="1.300" />
          </Svg>
          <Caret className="text-[#222]" />
        </button>
        <span className="mr-[5px] ml-[6px] h-[16px] w-px bg-[#c8c8c8]" />
        <button type="button" aria-label="查找图层" className="flex items-center gap-[2px]">
          <SearchBlueIcon />
          <Caret className="text-[#222]" />
        </button>
        <input aria-label="查找图层" placeholder="查找..." className="ml-[10px] w-[77px] outline-none placeholder:text-[#999]" />
        <StepButtons />
      </div>
      <div className="mx-px mb-px min-h-0 flex-1 overflow-hidden border border-[#808080] bg-white pt-px text-[12px]">
        <ul className="grid auto-rows-[16px] pl-[3px]">
          <li className="flex items-center">
            <Cell down right />
            <EyeIcon />
            <span className="mr-[3px] ml-[2px]"><ScreenLayerIcon /></span>
            <span className="leading-4">屏幕图层</span>
          </li>
          <li className="flex items-center">
            <Cell up down right box="-" />
            <NormalLayerIcon />
            <span className="ml-[2px] leading-4">普通图层</span>
          </li>
          <li className="flex items-center gap-[2px] whitespace-nowrap">
            <span className="-mr-[2px] flex self-stretch">
              <Cell up down />
              <Cell up right />
            </span>
            <EyeIcon />
            <PointerIcon />
            <EditLockIcon />
            <LineSetIcon color="text-[#3f7cc4]" />
            <span className="flex-1 bg-[#f0f0f0] leading-4 text-black"><Mixed text="图书馆字_dxf_new@CreateDatasource" /></span>
          </li>
          <li className="flex items-center">
            <Cell up right />
            <TerrainLayerIcon />
            <span className="ml-[2px] leading-4">地形图层</span>
          </li>
        </ul>
      </div>
    </section>
  );
}

function Viewport() {
  return (
    <section className="flex min-w-0 flex-1 flex-col pt-[2px]">
      <div className="flex h-[21px] shrink-0 items-center whitespace-nowrap text-[#777]">
        <div className="flex h-full w-[241px] items-center justify-between bg-[#666] pr-[8px] pl-[12px] text-white">
          <button type="button" className="pb-[2px]"><Mixed text="图书馆字_dxf_new@CreateDatasource" /></button>
          <button type="button" aria-label="关闭标签">
            <Svg s={9} vb={9}>
              <path d="m1 1 7 7M8 1 1 8" strokeWidth="1.500" />
            </Svg>
          </button>
        </div>
        <button type="button" className="w-[180px] pb-[2px] pl-[10px] text-left"><Mixed text="墙_new@CreateDatasource" /></button>
        <button type="button" className="pb-[2px] pl-[10px]">起始页</button>
        <button type="button" aria-label="标签列表" className="mr-[5px] ml-auto pb-[4px]">
          <svg width="8" height="5" viewBox="0 0 8 5" aria-hidden="true" className="text-[#333]">
            <path d="M0 0h8L4 4.500z" fill="currentColor" />
          </svg>
        </button>
      </div>
      <div className="flex flex-1 flex-col border border-t-2 border-[#808080] bg-[#090833] font-['Liberation_Mono','Noto_Sans_CJK_SC',monospace] text-[#d8d8d8]">
        <div className="flex flex-1 items-start justify-end pt-[25px] pr-[29px]">
          <svg width="88" height="90" viewBox="0 0 88 90" fill="none" role="img" aria-label="指北针">
            <path
              d="M54 7.200A42 42 0 1 1 34 7.200v8.300A34 34 0 1 0 54 15.500z"
              fill="#1e1c44"
              stroke="#77758f"
            />
            <rect x="36.500" y="2.500" width="15" height="15" rx="2" fill="#302e50" stroke="#77758f" />
            <text x="44" y="14.500" textAnchor="middle" fontSize="12" fontWeight="700" fontFamily="Liberation Sans, sans-serif" fill="#b8b6c4">
              N
            </text>
          </svg>
        </div>
        <div className="flex items-end justify-between pr-[17px] pl-[4px] text-[13px]">
          <div className="pb-[4px]">
            <div className="pl-[9px] leading-[20px]">1.99km</div>
            <div className="h-[11px] w-[97px] border border-t-0 border-[#d0d0d0]" />
          </div>
          <div className="leading-[15px] font-bold text-[#f0f0f0]">Copyright 2018 SuperMap</div>
        </div>
        <div className="flex h-[15px] items-center bg-[#545068] pt-[2px] text-[12px] leading-[15px] whitespace-pre">
          <span className="w-[148px] pl-[2px]">东经 0°2′ 37.44″</span>
          <span className="w-[138px] pl-[2px]">南纬 0°1′ 15.76″</span>
          <span className="flex-1 pl-[2px]">高度 0.00 m</span>
          <span className="w-[196px]">相机高度 18.03 km</span>
        </div>
      </div>
    </section>
  );
}

function PropertyPanel() {
  return (
    <section className="flex w-[291px] shrink-0 flex-col border border-[#a9a9a9] bg-[#f0f0f0]">
      <PanelHeader title="属性" />
      <div className="flex-1" />
      <div className="mx-px flex h-[27px] items-start border-t border-[#a9a9a9]">
        <button type="button" className="h-[24px] w-[66px] pb-[2px]">目录管理</button>
        <button type="button" className="h-[24px] w-[38px] bg-[#dcdcdc] pb-[2px]">属性</button>
      </div>
    </section>
  );
}

const logTimes = ["11:33:47", "11:36:03", "11:36:47"];

function OutputPanel() {
  return (
    <section className="flex h-[138px] shrink-0 flex-col border border-[#a9a9a9] bg-[#f0f0f0]">
      <PanelHeader title="输出窗口" />
      <div className="mr-[2px] mb-[2px] ml-px flex-1 border border-t-2 border-[#dcdcdc] border-t-[#8c8c8c] border-l-[#8c8c8c] bg-white pt-px pl-[2px] text-[12px] leading-[16px]">
        {logTimes.map((t) => (
          <p key={t}>
            <Mixed text={`[${t}] 共打开1个数据源，其中成功1个，失败0个。`} />
          </p>
        ))}
      </div>
    </section>
  );
}

/* ---------- taskbar ---------- */

const taskIcons = [
  <circle key="i" cx="28" cy="12" r="9" fill="#d0402c" />,
  <rect key="i" x="14" y="5" width="10" height="8" fill="#d8b070" />,
  <g key="i"><rect x="14" y="4" width="18" height="8" fill="#22d05a" /><rect x="32" y="4" width="10" height="8" fill="#3a4a30" /></g>,
  <path key="i" d="m36 3-8 8h14z" fill="#8a50c8" />,
  <circle key="i" cx="31" cy="11" r="8" fill="#c86a10" stroke="#8a3a08" strokeWidth="2" />,
  <path key="i" d="M14 8 32 4v6H14z" fill="#2a4f98" />,
  <rect key="i" x="15" y="4" width="27" height="8" fill="#fff" />,
  null,
  <ellipse key="i" cx="26" cy="10" rx="16" ry="7" fill="#fff" />,
  <rect key="i" x="18" y="4" width="22" height="8" fill="#3f82c0" />,
  <g key="i"><rect x="13" y="3" width="31" height="8" fill="#e8f0f8" /><rect x="20" y="5" width="14" height="6" fill="#4a88c8" /></g>,
];

function Taskbar() {
  return (
    <footer className="flex h-[8px] shrink-0 overflow-hidden bg-linear-to-r from-[#b5802c] via-[#c6a468] via-70% to-[#c08c2c] pl-[51px]">
      <div className="flex gap-[4px]">
        {taskIcons.map((icon, i) => (
          <button
            key={i}
            type="button"
            aria-label={`任务 ${i + 1}`}
            className={`flex h-[12px] w-[57px] items-start border ${i === 8 ? "border-[#f4e6c4] bg-[#d2b070]" : "border-[#dcb87a] bg-[#c49a4e]"}`}
          >
            <svg width="55" height="10" viewBox="0 0 55 10" aria-hidden="true">
              {icon}
            </svg>
          </button>
        ))}
      </div>
      <time className="mt-[4px] mr-[36px] ml-auto text-[12px] leading-[12px] text-white">12:20</time>
    </footer>
  );
}

export default function App() {
  return (
    <div className="flex h-screen flex-col overflow-hidden bg-[#f0f0f0] font-['Noto_Sans_CJK_SC',sans-serif] text-[13px] leading-4 text-[#444]">
      <div className="flex min-h-0 flex-1">
        <div className="flex min-w-0 flex-1 flex-col">
          <Header />
          <Ribbon />
          <main className="flex min-h-0 flex-1 gap-[4px] p-[2px]">
            <aside className="flex w-[262px] shrink-0 flex-col gap-[4px]">
              <WorkspacePanel />
              <LayerPanel />
            </aside>
            <div className="flex min-w-0 flex-1 flex-col gap-[4px]">
              <div className="flex min-h-0 flex-1 gap-[4px]">
                <Viewport />
                <PropertyPanel />
              </div>
              <OutputPanel />
            </div>
          </main>
        </div>
        <div className="flex w-[8px] shrink-0 flex-col">
          <i className="h-[33px] bg-[#e6e6e6]" />
          <i className="h-[67px] border-b border-[#d8d8d8] bg-white" />
          <i className="flex-1 bg-[#f3f3f3]" />
          <i className="h-[19px] border-t-2 border-[#c8c8c8] bg-[#dcdcdc]" />
        </div>
      </div>
      <Taskbar />
    </div>
  );
}
